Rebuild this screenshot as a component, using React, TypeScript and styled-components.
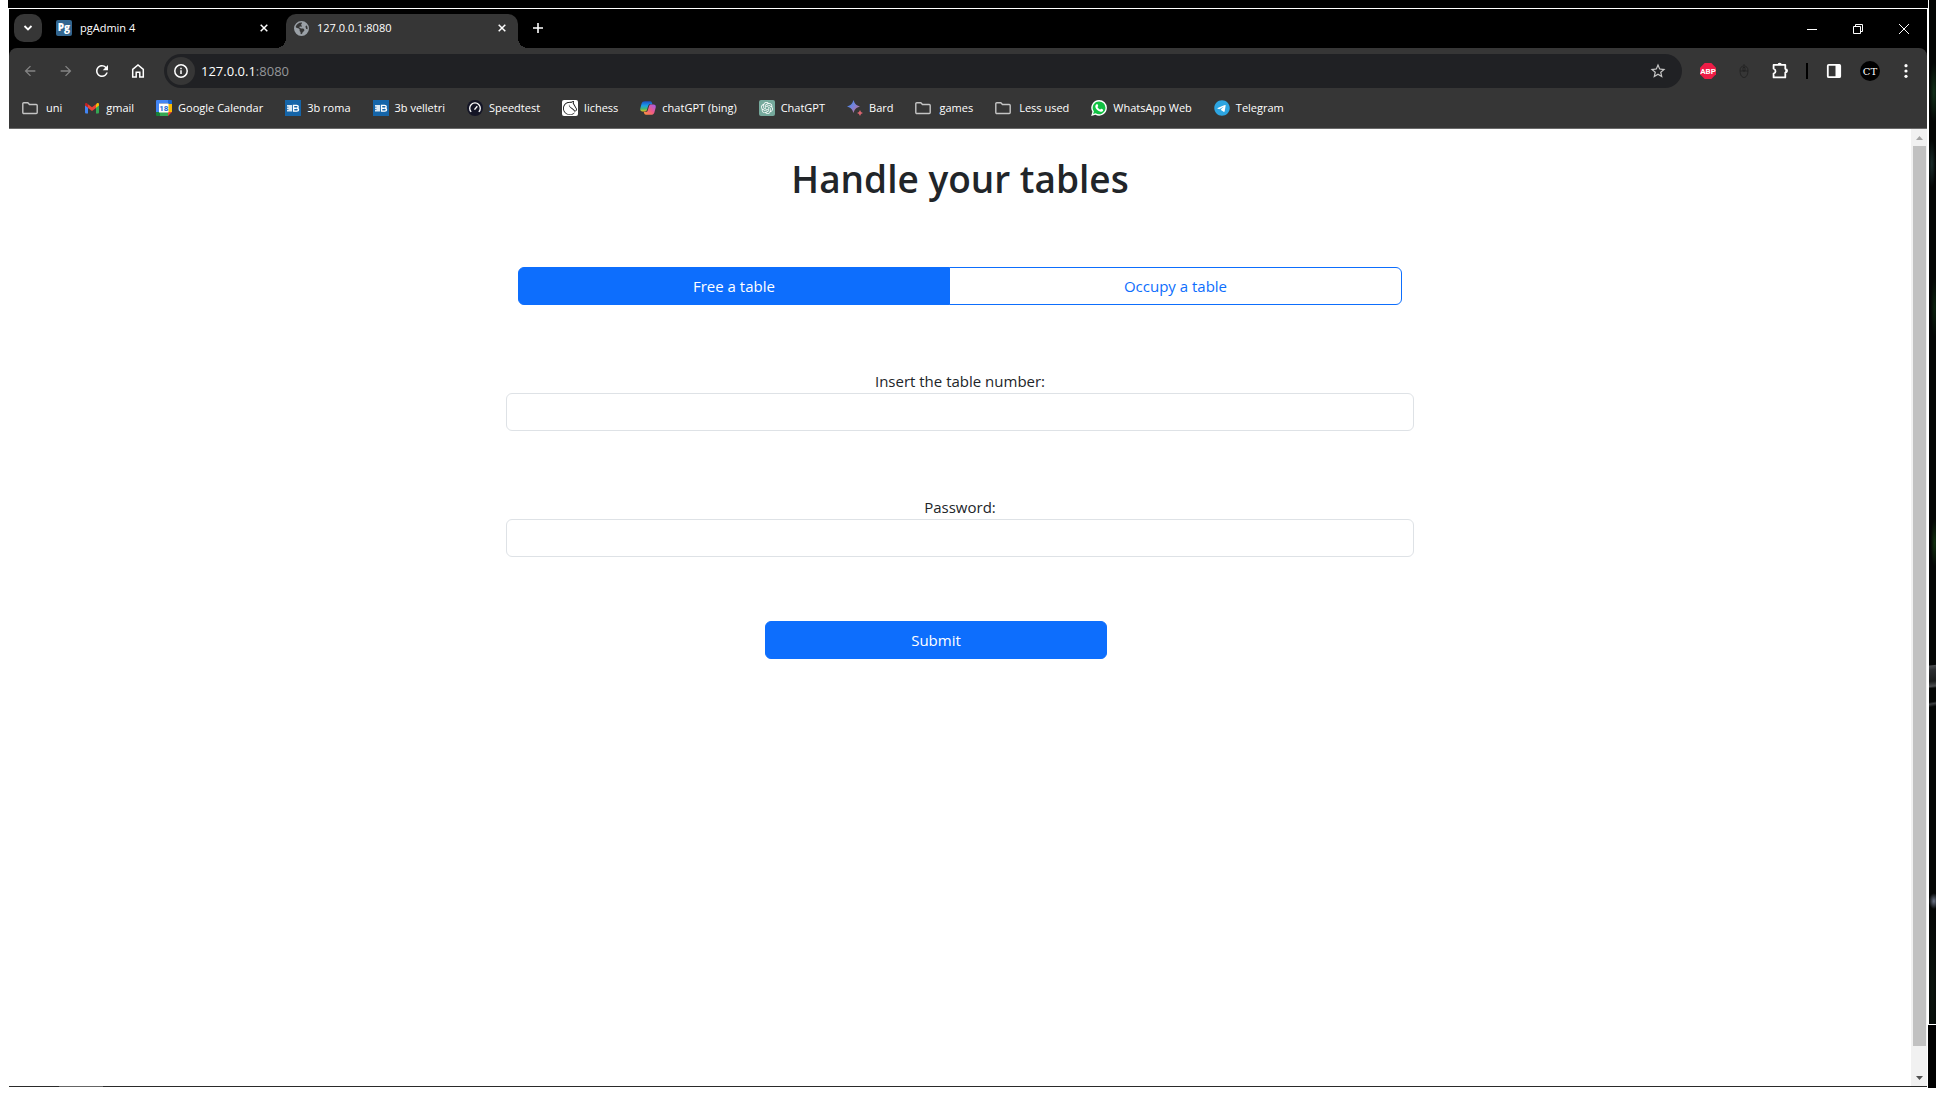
import React, { ReactNode, useState } from "react";
import styled, { createGlobalStyle, css } from "styled-components";
import { MdArrowBack, MdArrowForward, MdRefresh, MdStarOutline } from "react-icons/md";
import { FaEarthAmericas, FaTelegram } from "react-icons/fa6";
import { SiLichess, SiOpenai } from "react-icons/si";

const font = `"Open Sans", "Noto Sans", sans-serif`;

const GlobalStyle = createGlobalStyle`
  *, *::before, *::after { box-sizing: border-box; }
  body { margin: 0; background: #fff; font-family: ${font}; color: #212529; overflow: hidden; }
  button, input { font-family: inherit; }
  svg { display: block; flex: none; }
`;

/* ---------- desktop ---------- */

const Desktop = styled.div`
  display: flex;
  min-height: 100vh;
  padding: 0 0 8px 8px;
`;

const WindowColumn = styled.div`
  display: flex;
  flex: 1;
  flex-direction: column;
  min-width: 0;
`;

const BackEdge = styled.div`
  height: 8px;
  background: #000;
`;

const BrowserWindow = styled.div`
  display: flex;
  flex: 1;
  flex-direction: column;
  margin: 1px;
`;

const Wallpaper = styled.div`
  display: flex;
  flex-direction: column;
  width: 8px;
`;

const WallpaperImage = styled.div`
  flex: 1;
  margin-left: 1px;
  background:
    radial-gradient(ellipse 5px 30px at 70% 9%, #12301a, transparent),
    radial-gradient(ellipse 4px 24px at 40% 16%, #1a2c2a, transparent),
    radial-gradient(ellipse 4px 30px at 80% 30%, #0b210e, transparent),
    radial-gradient(ellipse 4px 24px at 80% 53%, #12300f, transparent),
    linear-gradient(174deg, transparent 64.9%, #4a4c4e 65%, #2c2e30 65.4%, #1a1c1c 66.5%, #4a4c4e 67%, transparent 67.2%),
    linear-gradient(170deg, transparent 68.5%, #3c3e40 68.7%, transparent 69%),
    radial-gradient(ellipse 5px 8px at 70% 88%, #6b7386, transparent),
    radial-gradient(ellipse 6px 90px at 50% 97%, #0a130d, transparent),
    #030504;
`;

const WallpaperTaskbar = styled.div`
  height: 63px;
  margin-top: 1px;
  background: #000;
`;

/* ---------- tab strip ---------- */

const TabStrip = styled.div`
  display: flex;
  align-items: flex-end;
  height: 39px;
  padding-left: 5px;
  background: #000;
  color: #fff;
`;

const buttonReset = css`
  display: flex;
  align-items: center;
  justify-content: center;
  flex: none;
  padding: 0;
  border: 0;
  background: none;
  color: inherit;
`;

const TabSearch = styled.button`
  ${buttonReset}
  width: 28px;
  height: 28px;
  margin: 0 4px 6px 0;
  border-radius: 10px;
  background: #363636;
`;

const Tab = styled.div<{ $active?: boolean }>`
  position: relative;
  display: flex;
  align-items: center;
  gap: 8px;
  width: ${(p) => (p.$active ? 232 : 240)}px;
  height: 34px;
  padding: ${(p) => (p.$active ? "0 6px 6px 8px" : "0 12px 6px 10px")};
  border-radius: 10px 10px 0 0;
  background: ${(p) => (p.$active ? "#363636" : "transparent")};
  font-size: 11px;
  line-height: 16px;

  ${(p) =>
    p.$active &&
    css`
      &::before,
      &::after {
        content: "";
        position: absolute;
        bottom: 0;
        width: 10px;
        height: 10px;
      }
      &::before {
        right: 100%;
        background: radial-gradient(circle at 0 0, transparent 10px, #363636 10px);
      }
      &::after {
        left: 100%;
        background: radial-gradient(circle at 100% 0, transparent 10px, #363636 10px);
      }
    `}
`;

const TabTitle = styled.span`
  flex: 1;
`;

const SmallButton = styled.button`
  ${buttonReset}
  width: 20px;
  height: 20px;
`;

const NewTab = styled.button`
  ${buttonReset}
  width: 28px;
  height: 28px;
  margin: 0 auto 6px 6px;
`;

const WindowControl = styled.button`
  ${buttonReset}
  width: 46px;
  height: 39px;
`;

/* ---------- toolbar ---------- */

const ToolbarBack = styled.div`
  background: #000;
`;

const Toolbar = styled.div`
  display: flex;
  align-items: center;
  gap: 8px;
  height: 40px;
  padding: 6px 7px 0;
  border-radius: 8px 8px 0 0;
  background: #363636;
  color: #fff;
`;

const ToolButton = styled.button<{ $dim?: boolean }>`
  ${buttonReset}
  width: 28px;
  height: 28px;
  color: ${(p) => (p.$dim ? "#848484" : "#fff")};
`;

const Omnibox = styled.div`
  display: flex;
  align-items: center;
  flex: 1;
  height: 34px;
  margin: 0 4px;
  padding: 0 10px 0 3px;
  border-radius: 17px;
  background: #202124;
`;

const SiteInfo = styled.button`
  ${buttonReset}
  width: 28px;
  height: 28px;
  border-radius: 50%;
  background: #363636;
`;

const Address = styled.div`
  flex: 1;
  padding-left: 6px;
  color: #fff;
  font-size: 13px;
  line-height: 20px;
`;

const Port = styled.span`
  color: #95979a;
`;

const Divider = styled.div`
  width: 2px;
  height: 16px;
  margin: 0 4px;
  background: #000;
`;

const Avatar = styled.span`
  display: flex;
  align-items: center;
  justify-content: center;
  width: 20px;
  height: 20px;
  border-radius: 50%;
  background: #000;
  font-family: "DejaVu Serif", serif;
  font-size: 10px;
`;

/* ---------- bookmarks ---------- */

const Bookmarks = styled.nav`
  display: flex;
  align-items: center;
  gap: 22px;
  height: 41px;
  padding: 0 13px;
  border-bottom: 1px solid #6a6a6a;
  background: #363636;
`;

const Bookmark = styled.a<{ $folder?: boolean }>`
  display: flex;
  align-items: center;
  gap: ${(p) => (p.$folder ? 8 : 6)}px;
  color: #fff;
  font-size: 11px;
  line-height: 16px;
  text-decoration: none;
  white-space: nowrap;
`;

/* ---------- page ---------- */

const Viewport = styled.div`
  display: flex;
  flex: 1;
`;

const TaskbarEdge = styled.div`
  height: 1px;
  background: linear-gradient(90deg, #2a2a2a 50px, #646464 50px, #646464 94px, #2a2a2a 94px);
`;

const Page = styled.main`
  display: flex;
  flex: 1;
  flex-direction: column;
  align-items: center;
  padding: 26px 12px;
  background: #fff;
`;

const Title = styled.h1`
  margin: 0 0 64px;
  font-size: 37px;
  font-weight: 600;
  line-height: 48px;
`;

const Form = styled.form`
  display: flex;
  flex-direction: column;
  gap: 64px;
  width: 100%;
  max-width: 908px;
  font-size: 15px;
  line-height: 24px;
`;

const ButtonGroup = styled.div`
  display: flex;
  margin: 0 12px;
`;

const Button = styled.button<{ $filled?: boolean }>`
  height: 38px;
  padding: 6px 12px;
  border: 1px solid #0d6efd;
  border-radius: 6px;
  background: ${(p) => (p.$filled ? "#0d6efd" : "#fff")};
  color: ${(p) => (p.$filled ? "#fff" : "#0d6efd")};
  font-size: 15px;
  line-height: 24px;
`;

const GroupButton = styled(Button)`
  flex: 1 1 auto;
  &:not(:last-child) {
    border-radius: 6px 0 0 6px;
  }
  &:not(:first-child) {
    margin-left: -1px;
    border-radius: 0 6px 6px 0;
  }
`;

const Field = styled.div`
  display: flex;
  flex-direction: column;
  text-align: center;
`;

const TextBox = styled.input`
  width: 100%;
  height: 38px;
  padding: 6px 12px;
  border: 1px solid #dee2e6;
  border-radius: 6px;
  background: #fff;
  color: #212529;
  font-size: 15px;
`;

const SubmitRow = styled.div`
  display: flex;
  justify-content: center;
  padding-right: 48px;
`;

const SubmitButton = styled(Button)`
  width: 342px;
`;

const ScrollBar = styled.div`
  display: flex;
  flex-direction: column;
  width: 16px;
  background: #f1f1f1;
`;

const ScrollArrow = styled.button`
  ${buttonReset}
  height: 17px;
`;

const ScrollThumb = styled.div`
  flex: 900;
  margin: 0 1px 0 2px;
  background: #c1c1c1;
`;

const ScrollRest = styled.div`
  flex: 23;
`;

/* ---------- icons ---------- */

const Icon = ({ size = 16, children }: { size?: number; children: ReactNode }) => (
  <svg width={size} height={size} viewBox="0 0 16 16" fill="none" aria-hidden="true">
    {children}
  </svg>
);

const CloseIcon = () => (
  <svg width="8" height="8" viewBox="0 0 8 8" stroke="#fff" strokeWidth="1.5" aria-hidden="true">
    <path d="M.7.7l6.600 6.600M7.300.7L.7 7.300" />
  </svg>
);

const FolderIcon = () => (
  <Icon>
    <path
      d="M1.800 2.700h4l1.700 1.800h6.700a1 1 0 011 1v7a1 1 0 01-1 1H1.800a1 1 0 01-1-1v-8.800a1 1 0 011-1z"
      stroke="#c4c4c4"
      strokeWidth="1.400"
    />
  </Icon>
);

const GmailIcon = () => (
  <Icon>
    <path d="M1 4v8.500a1 1 0 001 1h2V7z" fill="#4285f4" />
    <path d="M15 4v8.500a1 1 0 01-1 1h-2V7z" fill="#34a853" />
    <path d="M1 4.300v1.200l3 2.300V4.200L3 3.300C2.200 2.600 1 3.200 1 4.300z" fill="#c5221f" />
    <path d="M15 4.300v1.200l-3 2.300V4.200l1-.9c.8-.7 2-.1 2 1z" fill="#fbbc04" />
    <path d="M4 4.200l4 3.100 4-3.100v3.700l-4 3.100-4-3.100z" fill="#ea4335" />
  </Icon>
);

const CalendarIcon = () => (
  <Icon>
    <path d="M1 0h11v3.500H3.500V12H0V1a1 1 0 011-1z" fill="#4285f4" />
    <path d="M12 0h3a1 1 0 011 1v3h-4z" fill="#1967d2" />
    <path d="M12 4h4v8h-4z" fill="#fbbc04" />
    <path d="M0 12h4v4H1a1 1 0 01-1-1z" fill="#188038" />
    <path d="M4 12h8v4H4z" fill="#34a853" />
    <path d="M12 12h4l-4 4z" fill="#ea4335" />
    <path d="M3 3.500h9.500v9H3z" fill="#fff" />
    <text x="7.800" y="10.800" fill="#1a67d2" fontSize="8" fontWeight="700" textAnchor="middle" fontFamily="Roboto, sans-serif">
      18
    </text>
  </Icon>
);

const ThreeBIcon = () => (
  <Icon>
    <path d="M0 0h16v16H0z" fill="#1565a9" />
    <path d="M2 5h5v6.500H2V9.800h1.500v-.9H2V7.600h1.500v-.9H2z" fill="#dce9f4" />
    <path
      d="M8.500 5.400h3c2.300 0 2.300 2.700.2 2.800 2.500 0 2.500 2.900 0 2.900H8.600zM8.500 8.200h3"
      stroke="#fff"
      strokeWidth="1.400"
    />
  </Icon>
);

const SpeedtestIcon = () => (
  <Icon>
    <circle cx="8" cy="8" r="8" fill="#141526" />
    <path d="M4.200 11.900a5.300 5.300 0 117.600 0" stroke="#fff" strokeWidth="1.300" />
    <path d="M7.500 9.600l2.800-3.300" stroke="#fff" strokeWidth="1.400" />
  </Icon>
);

const LichessTile = styled.span`
  display: flex;
  padding: 1px;
  border-radius: 2px;
  background: #fff;
  color: #111;
`;

const ChatGptTile = styled.span`
  display: flex;
  padding: 2px;
  border-radius: 2px;
  background: #75a99c;
  color: #fff;
`;

const TelegramTile = styled.span`
  display: flex;
  border-radius: 50%;
  background: radial-gradient(circle, #fff 60%, transparent 62%);
  color: #2da5e1;
`;

const WhatsAppIcon = () => (
  <Icon>
    <path d="M8.100 0a7.800 7.800 0 017.800 7.800 7.800 7.800 0 01-11.500 6.900L.2 16l1.200-4.200A7.800 7.800 0 018.100 0z" fill="#fff" />
    <path d="M8.100 1.400a6.400 6.400 0 016.400 6.400 6.400 6.400 0 01-9.900 5.400l-2.500.8.800-2.500A6.400 6.400 0 018.100 1.400z" fill="#12c143" />
    <path
      d="M5.600 4.200c.4-.3.8-.2 1 .2l.6 1.400c.1.300 0 .5-.7 1.200.6 1.300 1.500 2.100 2.700 2.600.8-1 .9-1 1.300-.8l1.400.7c.4.200.3.700.1 1.200-.4.900-1.500 1.200-2.400 1-2.700-.6-4.500-2.400-5.200-4.500-.3-1.200.2-2.300 1.200-3z"
      fill="#fff"
    />
  </Icon>
);

const CopilotIcon = () => (
  <Icon>
    <defs>
      <linearGradient id="copilotCool" x1="0" y1="0" x2="0" y2="1">
        <stop offset="0" stopColor="#1b4fc4" />
        <stop offset=".45" stopColor="#1c9fe8" />
        <stop offset=".75" stopColor="#46b86a" />
        <stop offset="1" stopColor="#e9c51b" />
      </linearGradient>
      <linearGradient id="copilotWarm" x1="1" y1="0" x2="0" y2="1">
        <stop offset="0" stopColor="#9d5cf0" />
        <stop offset=".5" stopColor="#ef5a86" />
        <stop offset="1" stopColor="#ff9a33" />
      </linearGradient>
    </defs>
    <path d="M5 1.200h5.300c1 0 1.400.7 1.700 1.700l.4 1.400H10c-1 0-1.500.6-1.800 1.500L7 9.800c-.4 1.200-1 1.700-2.200 1.700H2.500C.8 11.500-.1 10.300.3 8.500l1.300-5C2.100 2 3.200 1.200 5 1.200z" fill="url(#copilotCool)" />
    <path d="M11 14.800H6c-1.200 0-1.600-.7-1.900-1.700l-.4-1.400H6c1 0 1.500-.5 1.800-1.500L9 6.200c.4-1.200 1-1.700 2.200-1.700h2.300c1.700 0 2.600 1.200 2.200 3l-1.300 5c-.5 1.500-1.600 2.300-3.400 2.300z" fill="url(#copilotWarm)" />
  </Icon>
);

const BardIcon = () => (
  <Icon>
    <defs>
      <linearGradient id="bardSpark" x1="0" y1="0" x2="1" y2="1">
        <stop offset="0" stopColor="#2f8bf5" />
        <stop offset=".5" stopColor="#7b82d8" />
        <stop offset="1" stopColor="#dd6670" />
      </linearGradient>
    </defs>
    <path d="M6.500 0C7.600 3.800 9.200 5.400 13 6.500 9.200 7.600 7.600 9.200 6.500 13 5.400 9.200 3.800 7.600 0 6.500 3.800 5.400 5.400 3.800 6.500 0z" fill="url(#bardSpark)" />
    <path d="M13 10c.6 1.700 1.300 2.400 3 3-1.700.6-2.400 1.300-3 3-.6-1.700-1.300-2.400-3-3 1.700-.6 2.400-1.300 3-3z" fill="#d96570" />
  </Icon>
);

const PgAdminIcon = () => (
  <Icon>
    <rect width="16" height="16" rx="2" fill="#326690" />
    <text x="8" y="10.800" fill="#fff" fontSize="10" fontWeight="800" textAnchor="middle" fontFamily="Open Sans, sans-serif">
      Pg
    </text>
  </Icon>
);

const HomeIcon = () => (
  <Icon>
    <path d="M2.700 6.300L8 2l5.300 4.300V14H9.800V9.200H6.200V14H2.700z" stroke="#fff" strokeWidth="1.500" />
  </Icon>
);

const InfoIcon = () => (
  <Icon>
    <circle cx="8" cy="8" r="6.200" stroke="#fff" strokeWidth="1.500" />
    <path d="M8 7.200v3.800M8 4.700v1.500" stroke="#fff" strokeWidth="1.500" />
  </Icon>
);

const AdblockIcon = () => (
  <Icon>
    <path d="M4.700 0h6.600L16 4.700v6.600L11.300 16H4.700L0 11.300V4.700z" fill="#ee1c46" />
    <text x="8" y="11" fill="#fff" fontSize="8" fontWeight="700" textAnchor="middle" fontFamily="Roboto, sans-serif">
      ABP
    </text>
  </Icon>
);

const MouseIcon = () => (
  <Icon>
    <path
      d="M8 3c-2.600 0-4 1.800-4 4.500S5 14.500 8 14.500s4-4.300 4-7S10.600 3 8 3zM4 8h8M7 4.500h2V8H7zM8 3V1"
      stroke="#1d1d1d"
      strokeWidth=".7"
    />
  </Icon>
);

const PuzzleIcon = () => (
  <Icon size={18}>
    <path
      d="M2.300 2.600h10.400v3.600c2.100.3 2.100 2.900 0 3.200v4.300H2.300v-3.400c2.300-.8 2.300-3.600 0-4.300z"
      stroke="#fff"
      strokeWidth="1.600"
      strokeLinejoin="round"
    />
    <path d="M5.800 2.600a1.900 1.900 0 013.800 0zM12.700 6a1.900 1.900 0 010 3.800z" fill="#fff" />
  </Icon>
);

const SidePanelIcon = () => (
  <Icon>
    <rect x="1.800" y="1.800" width="12.400" height="12.400" rx="1" stroke="#fff" strokeWidth="1.800" />
    <path d="M9.500 1.500H14v13H9.500z" fill="#fff" />
  </Icon>
);

const MenuIcon = () => (
  <Icon>
    <circle cx="8" cy="2.700" r="1.600" fill="#fff" />
    <circle cx="8" cy="8" r="1.600" fill="#fff" />
    <circle cx="8" cy="13.300" r="1.600" fill="#fff" />
  </Icon>
);

/* ---------- data ---------- */

const bookmarks: { label: string; icon: ReactNode; folder?: boolean }[] = [
  { label: "uni", icon: <FolderIcon />, folder: true },
  { label: "gmail", icon: <GmailIcon /> },
  { label: "Google Calendar", icon: <CalendarIcon /> },
  { label: "3b roma", icon: <ThreeBIcon /> },
  { label: "3b velletri", icon: <ThreeBIcon /> },
  { label: "Speedtest", icon: <SpeedtestIcon /> },
  { label: "lichess", icon: <LichessTile><SiLichess size={14} /></LichessTile> },
  { label: "chatGPT (bing)", icon: <CopilotIcon /> },
  { label: "ChatGPT", icon: <ChatGptTile><SiOpenai size={12} /></ChatGptTile> },
  { label: "Bard", icon: <BardIcon /> },
  { label: "games", icon: <FolderIcon />, folder: true },
  { label: "Less used", icon: <FolderIcon />, folder: true },
  { label: "WhatsApp Web", icon: <WhatsAppIcon /> },
  { label: "Telegram", icon: <TelegramTile><FaTelegram size={16} /></TelegramTile> },
];

export default function App() {
  const [mode, setMode] = useState<"free" | "occupy">("free");

  return (
    <>
      <GlobalStyle />
      <Desktop>
        <WindowColumn>
          <BackEdge />
          <BrowserWindow>
            <TabStrip>
              <TabSearch aria-label="Search tabs">
                <svg width="10" height="10" viewBox="0 0 10 10" fill="none" stroke="#fff" strokeWidth="1.800">
                  <path d="M1.500 3L5 6.500 8.500 3" />
                </svg>
              </TabSearch>
              <Tab>
                <PgAdminIcon />
                <TabTitle>pgAdmin 4</TabTitle>
                <SmallButton aria-label="Close pgAdmin 4"><CloseIcon /></SmallButton>
              </Tab>
              <Tab $active>
                <FaEarthAmericas size={15} color="#9aa0a6" />
                <TabTitle>127.0.0.1:8080</TabTitle>
                <SmallButton aria-label="Close 127.0.0.1:8080"><CloseIcon /></SmallButton>
              </Tab>
              <NewTab aria-label="New tab">
                <svg width="10" height="10" viewBox="0 0 10 10" stroke="#fff" strokeWidth="1.600">
                  <path d="M5 0v10M0 5h10" />
                </svg>
              </NewTab>
              <WindowControl aria-label="Minimize">
                <svg width="10" height="10" viewBox="0 0 10 10" stroke="#fff"><path d="M0 5.500h10" /></svg>
              </WindowControl>
              <WindowControl aria-label="Restore">
                <svg width="10" height="10" viewBox="0 0 10 10" stroke="#fff" fill="none">
                  <path d="M.5 2.500h7v7h-7zM2.500 2.500v-2h7v7h-2" />
                </svg>
              </WindowControl>
              <WindowControl aria-label="Close">
                <svg width="10" height="10" viewBox="0 0 10 10" stroke="#fff"><path d="M0 0l10 10M10 0L0 10" /></svg>
              </WindowControl>
            </TabStrip>

            <ToolbarBack>
              <Toolbar>
                <ToolButton $dim aria-label="Back"><MdArrowBack size={16} /></ToolButton>
                <ToolButton $dim aria-label="Forward"><MdArrowForward size={16} /></ToolButton>
                <ToolButton aria-label="Reload"><MdRefresh size={18} /></ToolButton>
                <ToolButton aria-label="Home"><HomeIcon /></ToolButton>
                <Omnibox>
                  <SiteInfo aria-label="Site information"><InfoIcon /></SiteInfo>
                  <Address>127.0.0.1<Port>:8080</Port></Address>
                  <ToolButton aria-label="Bookmark this page"><MdStarOutline size={18} color="#c7c7c7" /></ToolButton>
                </Omnibox>
                <ToolButton aria-label="Adblock Plus"><AdblockIcon /></ToolButton>
                <ToolButton aria-label="Mouse gestures"><MouseIcon /></ToolButton>
                <ToolButton aria-label="Extensions"><PuzzleIcon /></ToolButton>
                <Divider />
                <ToolButton aria-label="Side panel"><SidePanelIcon /></ToolButton>
                <ToolButton aria-label="Profile"><Avatar>CT</Avatar></ToolButton>
                <ToolButton aria-label="Menu"><MenuIcon /></ToolButton>
              </Toolbar>
            </ToolbarBack>

            <Bookmarks aria-label="Bookmarks">
              {bookmarks.map((b) => (
                <Bookmark key={b.label} href="#" $folder={b.folder}>
                  {b.icon}
                  {b.label}
                </Bookmark>
              ))}
            </Bookmarks>

            <Viewport>
              <Page>
                <Title>Handle your tables</Title>
                <Form onSubmit={(e) => e.preventDefault()}>
                  <ButtonGroup>
                    <GroupButton type="button" $filled={mode === "free"} onClick={() => setMode("free")}>
                      Free a table
                    </GroupButton>
                    <GroupButton type="button" $filled={mode === "occupy"} onClick={() => setMode("occupy")}>
                      Occupy a table
                    </GroupButton>
                  </ButtonGroup>
                  <Field>
                    <label htmlFor="table-number">Insert the table number:</label>
                    <TextBox id="table-number" type="text" />
                  </Field>
                  <Field>
                    <label htmlFor="password">Password:</label>
                    <TextBox id="password" type="password" />
                  </Field>
                  <SubmitRow>
                    <SubmitButton type="submit" $filled>Submit</SubmitButton>
                  </SubmitRow>
                </Form>
              </Page>
              <ScrollBar>
                <ScrollArrow aria-label="Scroll up">
                  <svg width="7" height="4" viewBox="0 0 7 4" fill="#a3a3a3"><path d="M3.500 0L7 4H0z" /></svg>
                </ScrollArrow>
                <ScrollThumb />
                <ScrollRest />
                <ScrollArrow aria-label="Scroll down">
                  <svg width="7" height="4" viewBox="0 0 7 4" fill="#505050"><path d="M3.500 4L7 0H0z" /></svg>
                </ScrollArrow>
              </ScrollBar>
            </Viewport>
            <TaskbarEdge />
          </BrowserWindow>
        </WindowColumn>
        <Wallpaper>
          <WallpaperImage />
          <WallpaperTaskbar />
        </Wallpaper>
      </Desktop>
    </>
  );
}
